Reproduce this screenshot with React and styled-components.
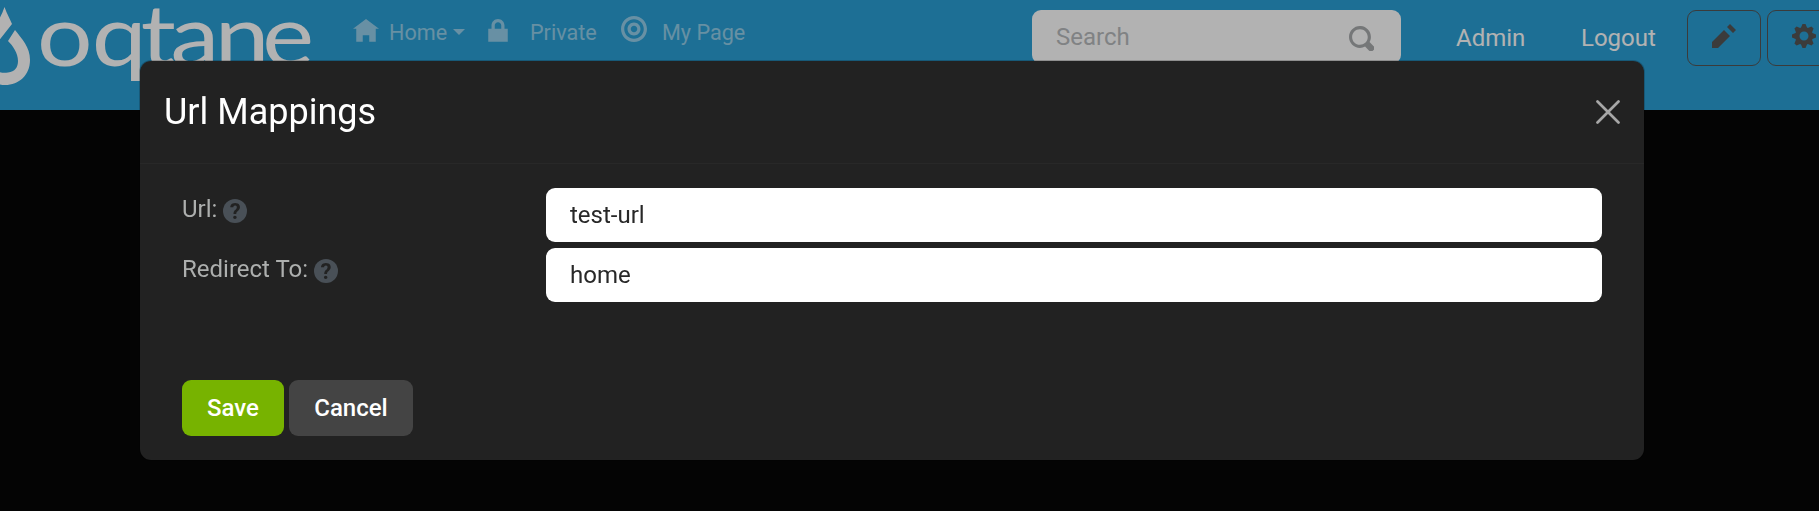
import React from "react";
import styled, { createGlobalStyle } from "styled-components";

const GlobalStyle = createGlobalStyle`
  * { box-sizing: border-box; }
  body {
    margin: 0;
    background: #060606;
    overflow: hidden;
    font-family: Roboto, "Liberation Sans", sans-serif;
    font-size: 24px;
    line-height: 36px;
  }
`;

const Page = styled.div`
  height: 511px;
  width: 1819px;
  overflow: hidden;
`;

const Header = styled.header`
  display: flex;
  align-items: flex-start;
  height: 110px;
  width: 1960px;
  background: #2a9fd6;
`;

const Logo = styled.svg`
  display: block;
  flex: none;
  width: 353px;
  height: 110px;
  fill: #fff;
  font-family: Lato, sans-serif;
  font-size: 86px;
`;

const Nav = styled.nav`
  display: flex;
  flex: none;
  width: 679px;
  color: rgba(255, 255, 255, 0.5);
`;

const NavItem = styled.a`
  display: flex;
  align-items: flex-start;
  margin-right: ${(p) => p.$after || 0}px;
  padding-top: 14px;
`;

const NavText = styled.span`
  width: ${(p) => p.$width}px;
  margin-left: ${(p) => p.$gap}px;
  padding-top: 1px;
  font-size: 21.6px;
  white-space: nowrap;
`;

const Caret = styled.span`
  margin: 15px 0 0 4px;
  border: 6px solid transparent;
  border-top-color: currentColor;
  border-bottom: 0;
`;

const Glyph = styled.svg`
  display: block;
  flex: none;
  width: ${(p) => p.$size || 26}px;
  height: ${(p) => p.$size || 26}px;
  margin-top: ${(p) => p.$top || 0}px;
  fill: currentColor;
`;

const SearchBox = styled.div`
  display: flex;
  justify-content: space-between;
  flex: none;
  width: 369px;
  height: 54px;
  margin-top: 10px;
  padding: 9px 27px 9px 24px;
  border-radius: 9px;
  background: #fff;
  color: #a8abad;
`;

const SearchHint = styled.span`
  font-size: 24px;
  color: #b8bbbd;
`;

const TopLink = styled.a`
  flex: none;
  width: ${(p) => p.$width}px;
  margin-left: ${(p) => p.$left}px;
  padding-top: 20px;
  font-size: 24px;
  color: #fff;
`;

const ToolButton = styled.button`
  display: flex;
  align-items: flex-start;
  justify-content: center;
  flex: none;
  width: 74px;
  height: 56px;
  margin: 10px 6px 0 0;
  padding: 13px 0 0;
  border: 1px solid #555;
  border-radius: 9px;
  background: transparent;
  color: #555;
`;

const Backdrop = styled.div`
  position: fixed;
  inset: 0;
  padding: 60px 0 0 139px;
  background: rgba(0, 0, 0, 0.3);
`;

const Modal = styled.section`
  width: 1506px;
  height: 401px;
  border: 1px solid rgba(0, 0, 0, 0.2);
  border-radius: 12px;
  background: #222;
  background-clip: padding-box;
`;

const ModalHeader = styled.div`
  display: flex;
  justify-content: space-between;
  height: 103px;
  padding: 24px 24px 0;
  border-bottom: 1px solid #282828;
`;

const Title = styled.h5`
  margin: 0;
  padding-top: 6px;
  font-size: 36px;
  font-weight: 400;
  line-height: 43px;
  color: #fff;
`;

const Close = styled.button`
  width: 24px;
  height: 24px;
  margin-top: 15px;
  padding: 0;
  border: 0;
  background: none;
  color: #a7a7a7;
`;

const Fields = styled.div`
  display: flex;
  flex-direction: column;
  gap: 6px;
  height: 192px;
  padding: 24px 42px 0;
`;

const Field = styled.div`
  display: grid;
  grid-template-columns: 364px 1056px;
  height: 54px;
`;

const Label = styled.label`
  display: flex;
  padding-top: 3px;
  gap: 6px;
  font-size: 24px;
  color: #adafae;
`;

const Input = styled.input`
  height: 54px;
  padding: 9px 24px;
  border: 0;
  border-radius: 9px;
  background: #fff;
  color: #282828;
  font: 24px/36px Roboto, sans-serif;
  outline: none;
`;

const Help = styled.span`
  width: 24px;
  height: 24px;
  margin-top: 8px;
  border-radius: 50%;
  background: #495057;
  color: #222;
  font-size: 22px;
  font-weight: 700;
  line-height: 25px;
  text-align: center;
`;

const Actions = styled.div`
  display: flex;
  gap: 5px;
  padding: 24px 42px 0;
`;

const Button = styled.button`
  height: 56px;
  width: ${(p) => p.$width}px;
  padding: 0;
  border: 0;
  border-radius: 9px;
  background: ${(p) => (p.$primary ? "#77b300" : "#444")};
  color: #fff;
  font: 500 24px/36px Roboto, sans-serif;
`;

const paths = {
  home: "M4 0l-4 3h1v4h2v-2h2v2h2v-4.03l1 .03-4-3z",
  lock: "M4 0c-1.1 0-2 .9-2 2v1h-1v4h6v-4h-1v-1c0-1.1-.9-2-2-2zm0 1c.56 0 1 .44 1 1v1h-2v-1c0-.56.44-1 1-1z",
  target: "M4 0c-2.2 0-4 1.8-4 4s1.8 4 4 4 4-1.8 4-4-1.8-4-4-4zm0 1c1.66 0 3 1.34 3 3s-1.34 3-3 3-3-1.34-3-3 1.34-3 3-3zm0 1c-1.11 0-2 .89-2 2s.89 2 2 2 2-.89 2-2-.89-2-2-2zm0 1c.56 0 1 .44 1 1s-.44 1-1 1-1-.44-1-1 .44-1 1-1z",
  search: "M3.5 0c-1.92 0-3.5 1.58-3.5 3.5s1.58 3.5 3.5 3.5c.59 0 1.17-.14 1.66-.41a1 1 0 0 0 .13.13l1 1a1.02 1.02 0 1 0 1.44-1.44l-1-1a1 1 0 0 0-.16-.13c.27-.49.44-1.06.44-1.66 0-1.92-1.55-3.5-3.5-3.5zm0 1c1.39 0 2.5 1.11 2.5 2.5 0 .66-.24 1.27-.66 1.72-.01.01-.02.02-.03.03a1 1 0 0 0-.13.13c-.44.4-1.04.63-1.69.63-1.39 0-2.5-1.11-2.5-2.5s1.11-2.5 2.5-2.5z",
  pencil: "M6 0l-1 1 2 2 1-1-2-2zm-2 2l-4 4v2h2l4-4-2-2z",
  cog: "M3.5 0l-.5 1.19c-.1.03-.19.08-.28.13l-1.19-.5-.72.72.5 1.19c-.05.1-.09.18-.13.28l-1.19.5v1l1.19.5c.04.1.08.18.13.28l-.5 1.19.72.72 1.19-.5c.09.04.18.09.28.13l.5 1.19h1l.5-1.19c.09-.04.19-.08.28-.13l1.19.5.72-.72-.5-1.19c.04-.09.09-.19.13-.28l1.19-.5v-1l-1.19-.5c-.03-.09-.08-.19-.13-.28l.5-1.19-.72-.72-1.19.5c-.09-.04-.19-.09-.28-.13l-.5-1.19h-1zm.5 2.5c.83 0 1.5.67 1.5 1.5s-.67 1.5-1.5 1.5-1.5-.67-1.5-1.5.67-1.5 1.5-1.5z",
};

function Icon({ name, size, top }) {
  return (
    <Glyph viewBox="0 0 8 8" $size={size} $top={top} aria-hidden="true">
      <path d={paths[name]} />
    </Glyph>
  );
}

export default function App() {
  return (
    <Page>
      <GlobalStyle />
      <Header>
        <Logo viewBox="0 0 353 110">
          <path d="M4.500 7C7 14 10 19 12 24L-6 47V26C-1 21 2 14 4.500 7ZM15 30C22 39 30 47 30 60C30 75 19 85 5 85C1 85-3 84-6 82V68C-2 73 3 73 8 72.500C15 72 18 67 18 61C18 53 13 46 8 41Z" />
          <text transform="translate(37 66) scale(1.14 1)" x="0 48 91 117 156 197.500" y="0">oqtane</text>
        </Logo>
        <Nav>
          <NavItem $after={20}>
            <Icon name="home" top={5} />
            <NavText $gap={10} $width={60}>Home</NavText>
            <Caret />
          </NavItem>
          <NavItem $after={25}>
            <Icon name="lock" top={5} />
            <NavText $gap={19} $width={66}>Private</NavText>
          </NavItem>
          <NavItem>
            <Icon name="target" top={2} />
            <NavText $gap={15} $width={90}>My Page</NavText>
          </NavItem>
        </Nav>
        <SearchBox>
          <SearchHint>Search</SearchHint>
          <Icon name="search" size={25} top={7} />
        </SearchBox>
        <TopLink $left={55} $width={70}>Admin</TopLink>
        <TopLink $left={55} $width={106}>Logout</TopLink>
        <ToolButton><Icon name="pencil" size={24} /></ToolButton>
        <ToolButton><Icon name="cog" size={24} /></ToolButton>
      </Header>
      <Backdrop>
        <Modal>
          <ModalHeader>
            <Title>Url Mappings</Title>
            <Close aria-label="Close">
              <svg width="24" height="24" viewBox="0 0 24 24" fill="none" stroke="currentColor" strokeWidth="2.7" strokeLinecap="round">
                <path d="M1.5 1.5L22.5 22.5M22.5 1.5L1.5 22.5" />
              </svg>
            </Close>
          </ModalHeader>
          <Fields>
            <Field>
              <Label>Url:<Help>?</Help></Label>
              <Input defaultValue="test-url" />
            </Field>
            <Field>
              <Label>Redirect To:<Help>?</Help></Label>
              <Input defaultValue="home" />
            </Field>
          </Fields>
          <Actions>
            <Button $primary $width={102}>Save</Button>
            <Button $width={124}>Cancel</Button>
          </Actions>
        </Modal>
      </Backdrop>
    </Page>
  );
}
